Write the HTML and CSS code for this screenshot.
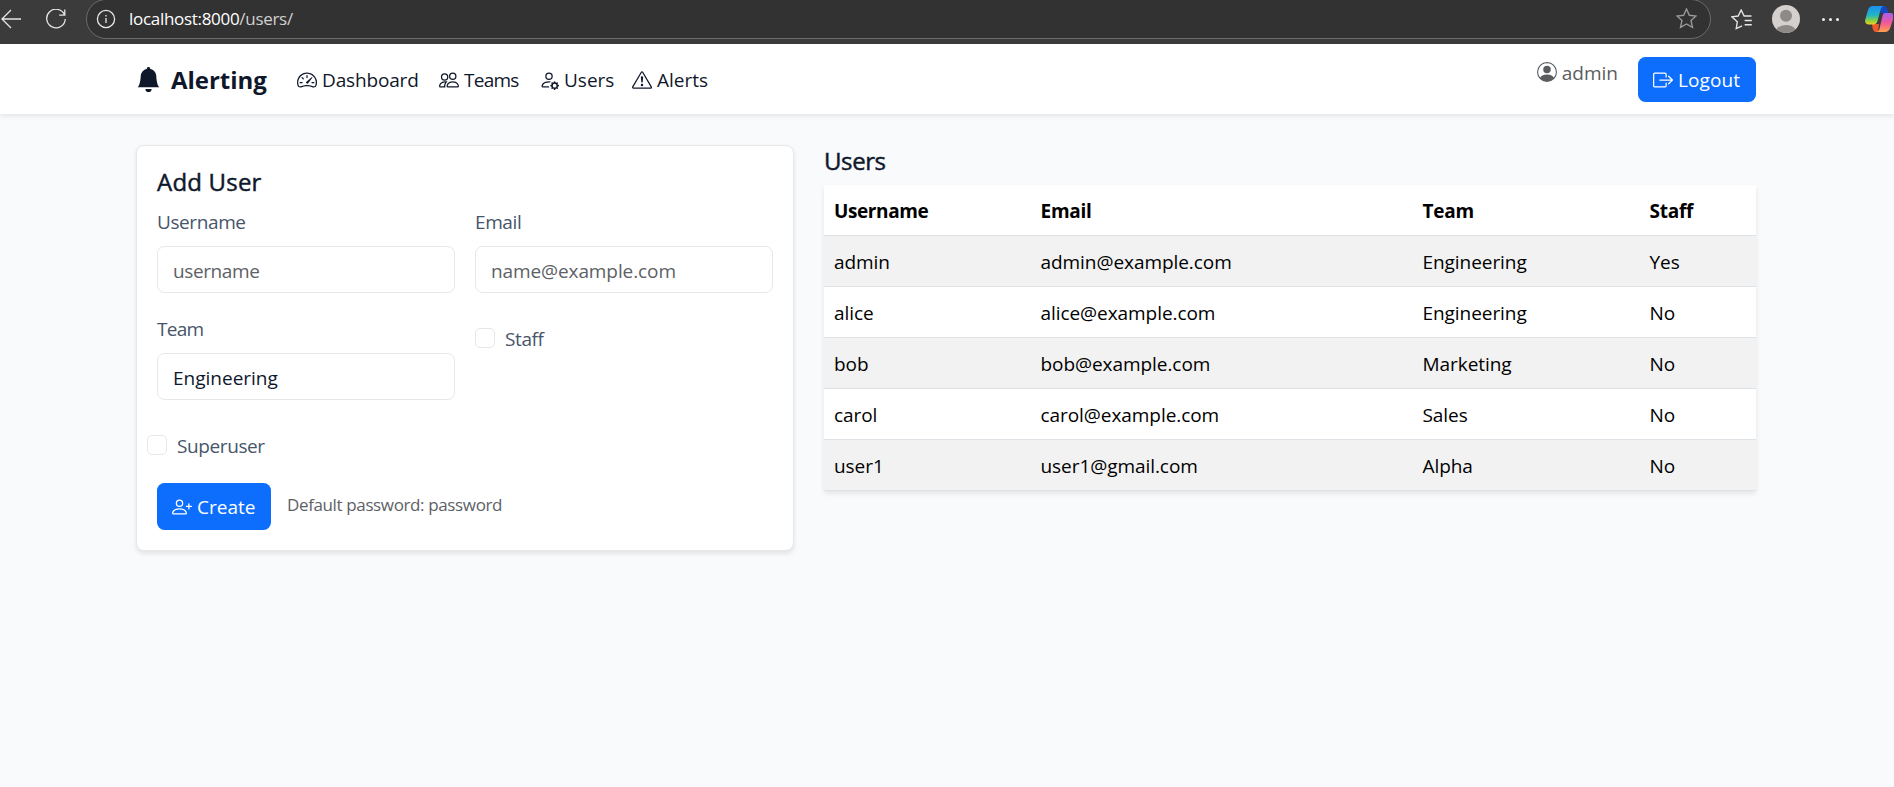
FILE: index.html
```html
<!DOCTYPE html>
<html lang="en">
<head>
<meta charset="utf-8">
<title>Users - Alerting</title>
<link rel="stylesheet" href="styles.css">
</head>
<body>
<div class="chrome">
  <svg class="ic-back" viewBox="0 0 20 20"><path d="M20 10H1M10 1L1 10l9 9"/></svg>
  <svg class="ic-reload" viewBox="0 0 20 20"><path d="M18.7 6.2A9.3 9.3 0 1 0 19.3 10M18.8 0.6V6.2H13.2"/></svg>
  <div class="address">
    <svg class="ic-info" viewBox="0 0 20 20"><circle cx="10" cy="10" r="8.6"/><path d="M10 9v5M10 6v1.4"/></svg>
    <span class="url">localhost:8000<span class="url-path">/users/</span></span>
    <svg class="ic-star" viewBox="0 0 20 20"><path d="M10 1l2.7 5.9 6.4.7-4.8 4.3 1.4 6.5L10 15.200l-5.700 3.200 1.400-6.500L.9 7.600l6.400-.7z"/></svg>
  </div>
  <svg class="ic-fav" viewBox="0 0 20 20"><path d="M10.500 16L5 18.700 6 12.200.8 7.500l6-.8L9.700 1l2.800 5.700h7M13 11h6.800M13 15h6.800"/></svg>
  <svg class="ic-avatar" viewBox="0 0 28 28"><circle cx="14" cy="14" r="14" fill="#d3d0cd"/><circle cx="14" cy="10.800" r="6" fill="#8e8a87"/><path d="M4.500 24.200a10.500 7.500 0 0 1 19 0A14 14 0 0 1 4.500 24.200z" fill="#8e8a87"/></svg>
  <span class="dots"><i></i><i></i><i></i></span>
  <svg class="ic-copilot" viewBox="0 0 28 28">
    <defs>
      <linearGradient id="ga" x1="0" y1="0" x2="0" y2="1"><stop offset="0" stop-color="#1c8df0"/><stop offset=".5" stop-color="#21b6c4"/><stop offset=".8" stop-color="#8fd13f"/><stop offset="1" stop-color="#f4d01f"/></linearGradient>
      <linearGradient id="gb" x1="0" y1="0" x2="0" y2="1"><stop offset="0" stop-color="#a560f0"/><stop offset=".5" stop-color="#f0569c"/><stop offset="1" stop-color="#ffa04a"/></linearGradient>
    </defs>
    <path d="M14 1h5c2 0 3 2 3.500 4L23.500 8H16z" fill="#1748c4"/>
    <path d="M7 19h7l-1 8h-2c-2 0-3-2-3.500-4z" fill="#ef5a2a"/>
    <path d="M8 1h11c-2 0-3 2-3.500 4l-3 11c-.7 2-2 3.500-4 3.500H4c-3 0-4.500-2-3.700-5L3 5c.8-2.700 2.400-4 5-4z" fill="url(#ga)"/>
    <path d="M20 8h5c3 0 4.300 2 3.500 5l-3 9c-.8 2.700-2.400 5-5 5H11c2 0 3-1.500 3.500-3.500l3-12.500c.5-2 1-3 2.500-3z" fill="url(#gb)"/>
  </svg>
</div>

<nav class="navbar">
  <a class="brand"><svg class="bi" viewBox="0 0 16 16"><path d="M8 16a2 2 0 0 0 2-2H6a2 2 0 0 0 2 2m.995-14.901a1 1 0 1 0-1.990 0A5 5 0 0 0 3 6c0 1.098-.5 6-2 7h14c-1.500-1-2-5.902-2-7 0-2.420-1.720-4.440-4.005-4.901"/></svg><span>Alerting</span></a>
  <a class="link dash"><svg class="bi" viewBox="0 0 16 16"><path d="M8 4a.5.5 0 0 1 .5.5V6a.5.5 0 0 1-1 0V4.500A.5.5 0 0 1 8 4M3.732 5.732a.5.5 0 0 1 .707 0l.915.914a.5.5 0 1 1-.708.708l-.914-.915a.5.5 0 0 1 0-.707M2 10a.5.5 0 0 1 .5-.5h1.586a.5.5 0 0 1 0 1H2.500A.5.5 0 0 1 2 10m9.500 0a.5.5 0 0 1 .5-.5h1.500a.5.5 0 0 1 0 1H12a.5.5 0 0 1-.5-.5m.754-4.246a.39.39 0 0 0-.527-.02L7.547 9.310a.91.91 0 1 0 1.302 1.258l3.434-4.297a.39.39 0 0 0-.029-.518z"/><path fill-rule="evenodd" d="M0 10a8 8 0 1 1 15.547 2.661c-.442 1.253-1.845 1.602-2.932 1.250C11.309 13.488 9.475 13 8 13c-1.474 0-3.310.488-4.615.911-1.087.352-2.490.003-2.932-1.250A8 8 0 0 1 0 10m8-7a7 7 0 0 0-6.603 9.329c.203.575.923.876 1.680.63C4.397 12.533 6.358 12 8 12s3.604.532 4.923.96c.757.245 1.477-.056 1.680-.631A7 7 0 0 0 8 3"/></svg><span>Dashboard</span></a>
  <a class="link teams"><svg class="bi" viewBox="0 0 16 16"><path d="M15 14s1 0 1-1-1-4-5-4-5 3-5 4 1 1 1 1zm-7.978-1L7 12.996c.001-.264.167-1.030.76-1.720C8.312 10.629 9.282 10 11 10c1.717 0 2.687.63 3.240 1.276.593.69.758 1.457.76 1.720l-.008.002-.014.002zM11 7a2 2 0 1 0 0-4 2 2 0 0 0 0 4m3-2a3 3 0 1 1-6 0 3 3 0 0 1 6 0M6.936 9.280a6 6 0 0 0-1.230-.247A7 7 0 0 0 5 9c-4 0-5 3-5 4q0 1 1 1h4.216A2.240 2.240 0 0 1 5 13c0-1.010.377-2.042 1.090-2.904.243-.294.526-.569.846-.816M4.920 10A5.500 5.500 0 0 0 4 13H1c0-.26.164-1.030.76-1.724.545-.636 1.492-1.256 3.160-1.275ZM1.500 5.500a3 3 0 1 1 6 0 3 3 0 0 1-6 0m3-2a2 2 0 1 0 0 4 2 2 0 0 0 0-4"/></svg><span class="tight">Teams</span></a>
  <a class="link users"><svg class="bi" viewBox="0 0 16 16"><path d="M11 5a3 3 0 1 1-6 0 3 3 0 0 1 6 0M8 7a2 2 0 1 0 0-4 2 2 0 0 0 0 4m.256 7a4.500 4.500 0 0 1-.229-1.004H3c.001-.246.154-.986.832-1.664C4.484 10.680 5.711 10 8 10q.39 0 .74.025c.226-.341.496-.65.804-.918Q8.844 9.002 8 9c-5 0-6 3-6 4s1 1 1 1zm3.630-4.540c.18-.613 1.048-.613 1.229 0l.043.148a.64.64 0 0 0 .921.382l.136-.074c.561-.306 1.175.308.87.869l-.075.136a.64.64 0 0 0 .382.92l.149.045c.612.18.612 1.048 0 1.229l-.15.043a.64.64 0 0 0-.38.921l.074.136c.305.561-.309 1.175-.87.87l-.136-.075a.64.64 0 0 0-.92.382l-.045.149c-.18.612-1.048.612-1.229 0l-.043-.15a.64.64 0 0 0-.921-.38l-.136.074c-.561.305-1.175-.309-.87-.87l.075-.136a.64.64 0 0 0-.382-.92l-.148-.045c-.613-.18-.613-1.048 0-1.229l.148-.043a.64.64 0 0 0 .382-.921l-.074-.136c-.306-.561.308-1.175.869-.87l.136.075a.64.64 0 0 0 .92-.382zM14 12.500a1.500 1.500 0 1 0-3 0 1.500 1.500 0 0 0 3 0"/></svg><span>Users</span></a>
  <a class="link alerts"><svg class="bi" viewBox="0 0 16 16"><path d="M7.938 2.016A.13.13 0 0 1 8.002 2a.13.13 0 0 1 .063.016.15.15 0 0 1 .054.057l6.857 11.667c.036.06.035.124.002.183a.2.2 0 0 1-.054.06.1.1 0 0 1-.066.017H1.146a.1.1 0 0 1-.066-.017.2.2 0 0 1-.054-.06.18.18 0 0 1 .002-.183L7.884 2.073a.15.15 0 0 1 .054-.057m1.044-.45a1.130 1.130 0 0 0-1.960 0L.165 13.233c-.457.778.091 1.767.98 1.767h13.713c.889 0 1.438-.99.98-1.767z"/><path d="M7.002 12a1 1 0 1 1 2 0 1 1 0 0 1-2 0M7.100 5.995a.905.905 0 1 1 1.800 0l-.35 3.507a.552.552 0 0 1-1.100 0z"/></svg><span>Alerts</span></a>
  <div class="account">
    <span class="who"><svg class="bi" viewBox="0 0 16 16"><path d="M11 6a3 3 0 1 1-6 0 3 3 0 0 1 6 0"/><path fill-rule="evenodd" d="M0 8a8 8 0 1 1 16 0A8 8 0 0 1 0 8m8-7a7 7 0 0 0-5.468 11.370C3.242 11.226 4.805 10 8 10s4.757 1.225 5.468 2.370A7 7 0 0 0 8 1"/></svg><span>admin</span></span>
    <button class="btn logout"><svg class="bi" viewBox="0 0 16 16"><path fill-rule="evenodd" d="M10 12.500a.5.5 0 0 1-.5.5h-8a.5.5 0 0 1-.5-.5v-9a.5.5 0 0 1 .5-.5h8a.5.5 0 0 1 .5.5v2a.5.5 0 0 0 1 0v-2A1.500 1.500 0 0 0 9.500 2h-8A1.500 1.500 0 0 0 0 3.500v9A1.500 1.500 0 0 0 1.500 14h8a1.500 1.500 0 0 0 1.500-1.500v-2a.5.5 0 0 0-1 0z"/><path fill-rule="evenodd" d="M15.854 8.354a.5.5 0 0 0 0-.708l-3-3a.5.5 0 0 0-.708.708L14.293 7.500H5.500a.5.5 0 0 0 0 1h8.793l-2.147 2.146a.5.5 0 0 0 .708.708z"/></svg><span>Logout</span></button>
  </div>
</nav>

<main class="content">
  <section class="card">
    <h5 class="title">Add User</h5>
    <form class="form">
      <div class="field"><label class="label snug">Username</label><div class="input placeholder"><span class="snug">username</span></div></div>
      <div class="field"><label class="label snug">Email</label><div class="input placeholder"><span class="mail">name@example.com</span></div></div>
      <div class="field"><label class="label tight">Team</label><div class="input"><span>Engineering</span></div></div>
      <label class="check staff"><span class="box"></span><span class="snug">Staff</span></label>
      <label class="check super"><span class="box"></span><span class="snug">Superuser</span></label>
      <div class="actions">
        <button class="btn create" type="button"><svg class="bi" viewBox="0 0 16 16"><path d="M6 8a3 3 0 1 0 0-6 3 3 0 0 0 0 6m2-3a2 2 0 1 1-4 0 2 2 0 0 1 4 0m4 8c0 1-1 1-1 1H1s-1 0-1-1 1-4 6-4 6 3 6 4m-1-.004c-.001-.246-.154-.986-.832-1.664C9.516 10.680 8.289 10 6 10s-3.516.68-4.168 1.332c-.678.678-.83 1.418-.832 1.664z"/><path fill-rule="evenodd" d="M13.500 5a.5.5 0 0 1 .5.5V7h1.500a.5.5 0 0 1 0 1H14v1.500a.5.5 0 0 1-1 0V8h-1.500a.5.5 0 0 1 0-1H13V5.500a.5.5 0 0 1 .5-.5"/></svg><span>Create</span></button>
        <span class="hint">Default password: password</span>
      </div>
    </form>
  </section>

  <section class="list">
    <h5 class="title">Users</h5>
    <table class="table">
      <colgroup><col class="c-name"><col class="c-email"><col class="c-team"><col class="c-staff"></colgroup>
      <thead><tr><th class="snug">Username</th><th>Email</th><th>Team</th><th>Staff</th></tr></thead>
      <tbody>
        <tr><td>admin</td><td>admin@example.com</td><td>Engineering</td><td>Yes</td></tr>
        <tr><td>alice</td><td>alice@example.com</td><td>Engineering</td><td>No</td></tr>
        <tr><td>bob</td><td>bob@example.com</td><td>Marketing</td><td>No</td></tr>
        <tr><td>carol</td><td>carol@example.com</td><td>Sales</td><td>No</td></tr>
        <tr><td>user1</td><td>user1@gmail.com</td><td>Alpha</td><td>No</td></tr>
      </tbody>
    </table>
  </section>
</main>
</body>
</html>
```

FILE: styles.css
```css
* { box-sizing: border-box; }
body {
  margin: 0;
  height: 787px;
  overflow: hidden;
  background: #f8fafc;
  color: #0f172a;
  font: 19px/30px "Open Sans", "Noto Sans", sans-serif;
}
svg { display: block; flex: none; }
.bi { width: 20px; height: 20px; fill: currentColor; }
.snug { letter-spacing: -.4px; }
.tight { letter-spacing: -.75px; }
.mail { letter-spacing: -.1px; }

.chrome {
  display: flex;
  align-items: center;
  height: 44px;
  padding-bottom: 6px;
  background: #3b3b3b;
}
.chrome svg { fill: none; stroke: #e6e6e6; stroke-width: 1.3; }
.ic-back { width: 20px; height: 20px; margin-left: 1px; }
.ic-reload { width: 20px; height: 20px; margin-left: 25px; }
.address {
  display: flex;
  align-items: center;
  width: 1625px;
  height: 40px;
  margin: -1px 0 0 20px;
  padding: 0 13px 0 9px;
  border: 1px solid #6b6b6b;
  border-radius: 20px;
  background: #323232;
}
.ic-info { width: 20px; height: 20px; }
.url { margin-left: 13px; font-size: 17px; color: #fff; letter-spacing: -.3px; }
.url-path { color: #d0d0d0; }
.chrome .ic-star { width: 21px; height: 21px; margin-left: auto; stroke: #9a9a9a; }
.ic-fav { width: 21px; height: 21px; margin-left: 20px; }
.chrome .ic-avatar { width: 28px; height: 28px; margin-left: 20px; stroke: none; }
.dots { display: flex; gap: 4px; margin-left: 22px; }
.dots i { width: 3px; height: 3px; border-radius: 50%; background: #eee; }
.chrome .ic-copilot { width: 28px; height: 28px; margin-left: 26px; stroke: none; }

.navbar {
  display: flex;
  align-items: center;
  height: 70px;
  padding: 1px 138px 0 136px;
  background: #fff;
  box-shadow: 0 2px 5px rgba(0, 0, 0, .09);
}
.brand { display: flex; align-items: center; width: 161px; gap: 10px; font-size: 24px; font-weight: 700; letter-spacing: -.05px; }
.brand .bi { width: 25px; height: 25px; }
.link { display: flex; align-items: center; gap: 5px; }
.dash { width: 142px; letter-spacing: -.15px; }
.teams { width: 100px; }
.users { width: 93px; }
.account { display: flex; align-items: center; gap: 20px; margin-left: auto; }
.who { display: flex; align-items: center; gap: 5px; margin-bottom: 14px; color: #5a5d60; }
.who .bi { margin-top: -2px; }
.btn {
  display: flex;
  align-items: center;
  gap: 5px;
  border: 0;
  border-radius: 7.5px;
  background: #0d6efd;
  color: #fff;
  font: inherit;
}
.logout { width: 118px; height: 45px; padding: 0 15px; letter-spacing: .1px; }

.content { display: flex; gap: 30px; align-items: flex-start; padding: 31px 138px 0 136px; }
.card {
  width: 658px;
  height: 406px;
  padding: 20px;
  border: 1px solid #e5e7eb;
  border-radius: 8px;
  background: #fff;
  box-shadow: 0 2.500px 5px rgba(0, 0, 0, .09);
}
.title { margin: 0; font-size: 24px; line-height: 30px; font-weight: 500; -webkit-text-stroke: .45px currentColor; }
.card .title { padding-top: 1px; letter-spacing: .2px; }
.form {
  display: grid;
  grid-template-columns: 298px 298px;
  column-gap: 20px;
  grid-template-rows: 107px 107px 30px;
  margin-top: -1px;
}
.field { padding-top: 11px; }
.label { display: block; height: 39px; color: #475569; }
.input {
  display: flex;
  align-items: center;
  height: 47px;
  padding: 2px 15px 0;
  border: 1px solid #e5e7eb;
  border-radius: 7.5px;
}
.placeholder { color: #5d6166; }
.check { display: flex; align-items: flex-start; gap: 10px; color: #475569; }
.box { width: 20px; height: 20px; margin-top: 4px; border: 1px solid #e5e7eb; border-radius: 5px; }
.staff { padding-top: 21px; }
.super { margin-left: -10px; padding-top: 21px; }
.actions { grid-column: 1 / 3; display: flex; align-items: center; gap: 16px; margin-top: 43px; height: 47px; }
.create { width: 114px; height: 47px; padding: 0 15px; }
.hint { margin-top: -4px; font-size: 17px; letter-spacing: -.37px; color: #5d6166; }

.list { width: 932px; padding-top: 1px; }
.list .title { height: 39px; letter-spacing: -.4px; }
.table {
  width: 932px;
  border-collapse: separate;
  border-spacing: 0;
  table-layout: fixed;
  background: #fff;
  color: #000;
  box-shadow: 0 2.500px 5px rgba(0, 0, 0, .09);
}
.c-name { width: 206.5px; }
.c-email { width: 382px; }
.c-team { width: 227px; }
.c-staff { width: 116.500px; }
.table th, .table td { height: 51px; padding: 2px 10px 0; border-bottom: 1px solid #dee2e6; text-align: left; }
.table th:not(.snug) { letter-spacing: -.25px; }
.table td { letter-spacing: -.06px; }
.table tbody tr:nth-child(odd) { background: #f2f2f2; }
```
